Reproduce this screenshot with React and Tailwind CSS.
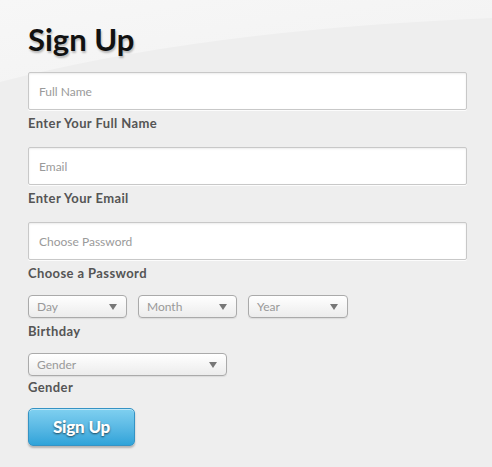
import React from 'react';

const font = { fontFamily: '"Source Sans Pro", Lato, "Liberation Sans", sans-serif' };

function TextField({ placeholder, label, type = 'text' }) {
  return (
    <div className="flex flex-col">
      <input
        type={type}
        placeholder={placeholder}
        className="h-[38px] w-[439px] rounded-[2px] border border-[#c8c8c8] bg-white px-[10px] text-[12px] text-[#444] shadow-[inset_0_1px_2px_rgba(0,0,0,0.08),0_1px_0_rgba(255,255,255,0.8)] outline-none placeholder:text-[#9a9a9a]"
      />
      <span className="mt-[5px] text-[13px] font-bold leading-[16px] tracking-[0.4px] text-[#555]">{label}</span>
    </div>
  );
}

function Select({ text, width }) {
  return (
    <div
      className={`flex h-[23px] ${width} items-center justify-between rounded-[4px] border border-[#aaa] bg-gradient-to-b from-white to-[#ececec] pl-[8px] pr-[9px] shadow-[0_1px_1px_rgba(0,0,0,0.08)]`}
    >
      <span className="text-[12px] text-[#999]">{text}</span>
      <svg width="8" height="6" viewBox="0 0 8 6">
        <path d="M0 0 L8 0 L4 6 Z" fill="#777" />
      </svg>
    </div>
  );
}

export default function App() {
  return (
    <div className="relative h-[467px] w-[492px] overflow-hidden bg-[#eeeeee]" style={font}>
      {/* gloss */}
      <svg className="absolute left-0 top-0" width="492" height="90" viewBox="0 0 492 90">
        <defs>
          <linearGradient id="gl" x1="0" y1="0" x2="1" y2="1">
            <stop offset="0" stopColor="#f7f7f7" />
            <stop offset="1" stopColor="#f2f2f2" />
          </linearGradient>
        </defs>
        <path d="M0 0 L492 0 L492 18 Q200 30 0 82 Z" fill="url(#gl)" />
      </svg>

      <div className="relative flex flex-col px-[28px] pt-[20px]">
        <h1 className="text-[31px] font-bold leading-[38px] text-[#111] [text-shadow:1px_2px_2px_rgba(0,0,0,0.25)]">
          Sign Up
        </h1>

        <div className="mt-[14px] flex flex-col gap-[16px]">
          <TextField placeholder="Full Name" label="Enter Your Full Name" />
          <TextField placeholder="Email" label="Enter Your Email" />
          <TextField placeholder="Choose Password" label="Choose a Password" type="password" />
        </div>

        <div className="mt-[14px] flex gap-[11px]">
          <Select text="Day" width="w-[99px]" />
          <Select text="Month" width="w-[99px]" />
          <Select text="Year" width="w-[100px]" />
        </div>
        <span className="mt-[5px] text-[13px] font-bold leading-[16px] tracking-[0.4px] text-[#555]">Birthday</span>

        <div className="mt-[14px]">
          <Select text="Gender" width="w-[199px]" />
        </div>
        <span className="mt-[3px] text-[13px] font-bold leading-[16px] tracking-[0.4px] text-[#555]">Gender</span>

        <button className="mt-[13px] h-[38px] w-[107px] rounded-[5px] border border-[#3593c4] bg-gradient-to-b from-[#7fd0f0] to-[#2ea3d9] text-[17px] font-black tracking-[-0.2px] text-white shadow-[0_2px_2px_rgba(0,0,0,0.25),inset_0_1px_0_rgba(255,255,255,0.5)] [text-shadow:0_1px_2px_rgba(0,0,0,0.6)]">
          Sign Up
        </button>
      </div>
    </div>
  );
}
